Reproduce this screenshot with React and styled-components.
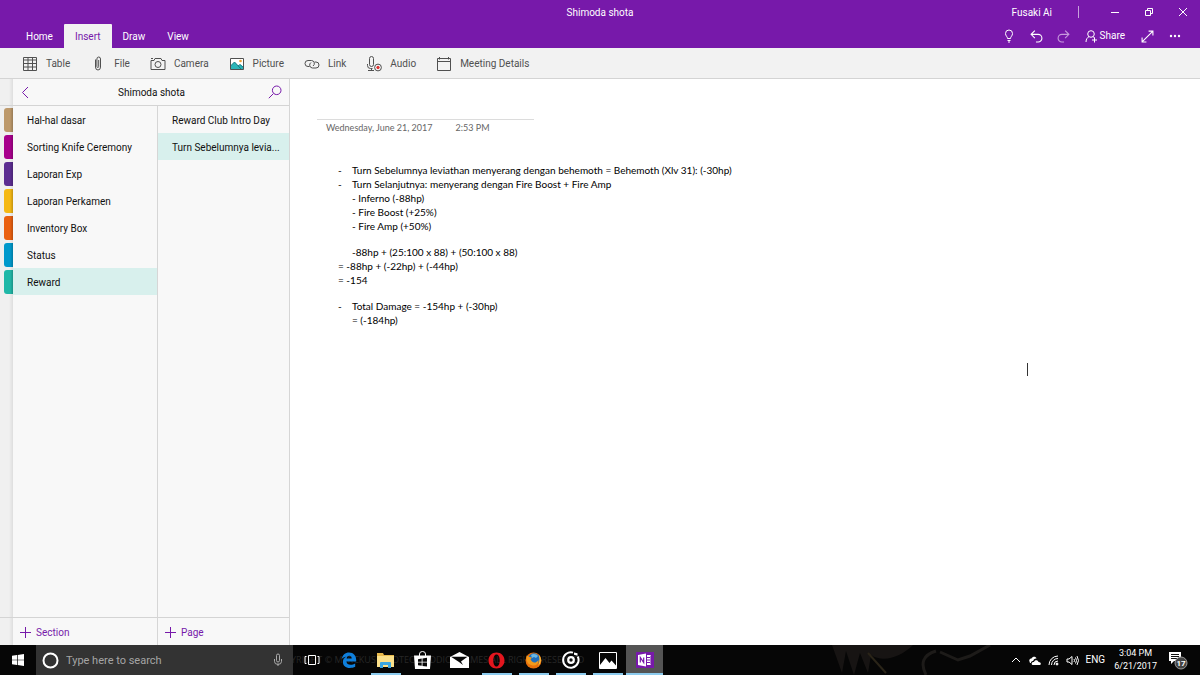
import React from "react";
import styled, { createGlobalStyle } from "styled-components";

const Global = createGlobalStyle`
  *, *::before, *::after { box-sizing: border-box; }
  body { margin: 0; background: #fff; }
  button, input { font: inherit; color: inherit; border: 0; padding: 0; background: none; }
  svg { display: block; flex: none; }
`;

const ui = `Roboto, "Open Sans", sans-serif`;
const noteFont = `Lato, "Open Sans", sans-serif`;

const Window = styled.div`
  min-height: 100vh;
  display: flex;
  flex-direction: column;
  font-family: ${ui};
  font-size: 10px;
  line-height: 14px;
  color: #111;
`;

const Top = styled.header`
  background: #7719aa;
  color: #fff;
`;

const TitleBar = styled.div`
  display: grid;
  grid-template-columns: 1fr auto 1fr;
  align-items: center;
  height: 24px;
`;

const TitleText = styled.h1`
  grid-column: 2;
  margin: 0;
  padding-top: 2px;
  font-size: 10px;
  font-weight: 400;
`;

const WindowControls = styled.div`
  display: flex;
  justify-content: flex-end;
  align-items: center;
  height: 24px;
`;

const UserName = styled.span`
  padding-top: 2px;
`;

const Divider = styled.span`
  width: 1px;
  height: 12px;
  margin: 0 19px 0 26px;
  background: #c8a2dc;
`;

const ControlButton = styled.button`
  display: grid;
  place-items: center;
  width: ${(p) => p.$width || 34}px;
  height: 24px;
`;

const RibbonRow = styled.div`
  display: flex;
  justify-content: space-between;
  height: 24px;
`;

const Tabs = styled.nav`
  display: flex;
  padding-left: 15px;
`;

const Tab = styled.button`
  height: 24px;
  padding: 2px 11px 0;
  border-radius: 1px 1px 0 0;
  background: ${(p) => (p.$active ? "#f2f2f2" : "transparent")};
  color: ${(p) => (p.$active ? "#7719aa" : "#fff")};
`;

const Quick = styled.div`
  display: flex;
  align-items: center;
  padding-right: 12px;
`;

const ShareButton = styled.button`
  display: flex;
  align-items: center;
  gap: 2px;
  height: 24px;
  margin: 0 9px 0 8px;
`;

const Toolbar = styled.div`
  display: flex;
  align-items: center;
  gap: 20px;
  height: 31px;
  padding-left: 22px;
  background: #f2f2f2;
  border-bottom: 1px solid #d4d4d4;
  color: #505050;
`;

const Tool = styled.button`
  display: grid;
  grid-template-columns: 16px auto;
  align-items: center;
  justify-items: center;
  gap: 8px;
  height: 30px;
  padding-top: 1px;
`;

const Main = styled.main`
  flex: 1;
  display: flex;
  min-height: 0;
`;

const Side = styled.aside`
  display: grid;
  grid-template-columns: 13px 145px 131px;
  grid-template-rows: 27px 1fr 28px;
  flex: none;
  background: #f8f8f8;
  border-right: 1px solid #d6d6d6;
`;

const RailCell = styled.div`
  background: linear-gradient(90deg, #f0f0f0 9px, #dedede);
  border-bottom: ${(p) => (p.$top ? "1px solid #d4d4d4" : "0")};
  border-top: ${(p) => (p.$foot ? "1px solid #d4d4d4" : "0")};
`;

const Rail = styled(RailCell)`
  display: flex;
  flex-direction: column;
  gap: 3px;
  padding: 2px 0 0 4px;
`;

const ColourTab = styled.span`
  height: 24px;
  border-radius: 3px 0 0 3px;
  background: linear-gradient(90deg, transparent 6px, rgba(0, 0, 0, 0.2)), ${(p) => p.$colour};
`;

const BookHeader = styled.div`
  grid-column: 2 / 4;
  display: flex;
  align-items: center;
  justify-content: space-between;
  padding: 0 7px 0 8px;
  border-bottom: 1px solid #d4d4d4;
`;

const BookTitle = styled.h2`
  margin: 0;
  padding-top: 2px;
  font-size: 10px;
  font-weight: 400;
`;

const IconButton = styled.button`
  display: flex;
  width: 14px;
`;

const List = styled.ul`
  margin: 0;
  padding: 0;
  list-style: none;
  border-right: ${(p) => (p.$divided ? "1px solid #d6d6d6" : "0")};
`;

const Entry = styled.button`
  display: block;
  width: 100%;
  height: 27px;
  padding: 2px 8px 0 14px;
  text-align: left;
  white-space: nowrap;
  overflow: hidden;
  text-overflow: ellipsis;
  background: ${(p) => (p.$active ? "#d8f0ed" : "transparent")};
`;

const AddButton = styled.button`
  display: flex;
  align-items: center;
  gap: 5px;
  padding: 2px 0 0 7px;
  border-top: 1px solid #d4d4d4;
  border-right: ${(p) => (p.$divided ? "1px solid #d6d6d6" : "0")};
  color: #7719aa;
`;

const Page = styled.article`
  flex: 1;
  padding: 40px 27px;
  font-family: ${noteFont};
  font-size: 10px;
  line-height: 14px;
  position: relative;
`;

const Stamp = styled.div`
  display: flex;
  gap: 23px;
  width: 217px;
  padding: 1px 0 0 9px;
  border-top: 1px solid #dcdcdc;
  font-size: 9px;
  color: #666;
`;

const Note = styled.div`
  display: flex;
  flex-direction: column;
  gap: 12px;
  padding: 28px 0 0 21px;
  color: #000;
`;

const Line = styled.div`
  display: grid;
  grid-template-columns: 14px 1fr;
`;

const Caret = styled.span`
  position: absolute;
  left: 81%;
  top: 284px;
  width: 1px;
  height: 13px;
  background: #333;
`;

const Taskbar = styled.footer`
  position: relative;
  display: flex;
  height: 30px;
  background: #060606;
  color: #fff;
  overflow: hidden;
`;

const Wallpaper = styled.svg`
  position: absolute;
  right: 150px;
  top: 0;
`;

const WallText = styled.span`
  position: absolute;
  left: 273px;
  top: 8px;
  font-family: "Open Sans", sans-serif;
  font-size: 9px;
  color: #262626;
  white-space: nowrap;
`;

const StartButton = styled.button`
  display: grid;
  place-items: center;
  width: 36px;
`;

const SearchBox = styled.label`
  position: relative;
  display: flex;
  align-items: center;
  gap: 7px;
  width: 257px;
  padding: 0 10px 0 6px;
  background: #333;
`;

const SearchInput = styled.input`
  flex: 1;
  min-width: 0;
  height: 20px;
  font-size: 11px;
  &::placeholder { color: #a5a5a5; opacity: 1; }
`;

const Apps = styled.div`
  position: relative;
  display: flex;
  flex: 1;
`;

const TaskButton = styled.button`
  display: grid;
  place-items: center;
  width: 37px;
  height: 30px;
  background: ${(p) => (p.$active ? "#545454" : "transparent")};
  box-shadow: ${(p) => (p.$active ? "inset 0 -2px #8ccbee" : "none")};
  position: relative;
  &::after {
    content: "";
    display: ${(p) => (p.$open ? "block" : "none")};
    position: absolute;
    left: 4px;
    right: 3px;
    bottom: 0;
    height: 2px;
    background: #8ccbee;
  }
`;

const Tray = styled.div`
  position: relative;
  display: flex;
  align-items: center;
  gap: 7px;
  padding-right: 12px;
`;

const Clock = styled.time`
  font-size: 9px;
  line-height: 13px;
  text-align: center;
  margin: 0 4px 0 2px;
`;

const Icon = ({ w = 16, h = 16, vw, vh, c = "currentColor", s = 1, children }) => (
  <svg width={w} height={h} viewBox={`0 0 ${vw || w} ${vh || h}`} fill="none" stroke={c} strokeWidth={s} aria-hidden="true">
    {children}
  </svg>
);

const tools = [
  ["Table", <Icon w={16} h={14}><path d="M1.5 .5h13v13h-13zM1.5 3h13M1.5 6.500h13M1.5 10h13M6 .5v13M10.500 .5v13" /></Icon>],
  ["File", <Icon w={10} h={16}><path d="M2.500 3.500v7.500a2.500 3 0 0 0 5 0V3a1.800 2 0 0 0-3.600 0v7.500a.9 1 0 0 0 1.800 0V4" /></Icon>],
  ["Camera", <Icon w={16} h={14}><path d="M1 3.500h3l1-2h6l1 2h3v9H1zM1 1.500h2" /><circle cx="8" cy="7.500" r="3" /></Icon>],
  ["Picture", <Icon w={16} h={14}><path fill="#fff" stroke="none" d="M1.500 1.500h13v11h-13z" /><path d="M1.500 12.500V9l4-4 4 4 2-1.500 3 2.500v2.500z" fill="#2bb5b8" stroke="none" /><path d="M1.500 9l4-4 7 7.500M9 9l2-1.500 3.500 3" stroke="#147c83" /><circle cx="11.500" cy="4" r="1.300" fill="#f0a030" stroke="none" /><path d="M1.500 1.500h13v11h-13z" /></Icon>],
  ["Link", <Icon w={16} h={12}><path d="M5.500 8.500H4A3 3 0 0 1 4 2.500h3.500a3 3 0 0 1 1.500 5.500M10.500 4H12a3 3 0 0 1 0 6H8.500A3 3 0 0 1 7 4.500" /></Icon>],
  ["Audio", <Icon w={16} h={16}><path d="M3.500 2.500a2 2 0 0 1 4 0v6a2 2 0 0 1-4 0zM1.500 8v1.500a3 3 0 0 0 3 3h2M5.500 12.500V15M2 14.500h6" /><circle cx="12" cy="11.500" r="3.400" /><circle cx="12" cy="11.500" r="1.200" fill="#e03030" stroke="#e03030" /></Icon>],
  ["Meeting Details", <Icon w={16} h={14}><path d="M1.500 1.500h13v12h-13zM1.500 4.500h13M3.500 0v2.500M12.500 0v2.500" /></Icon>],
];

const sections = [
  ["Hal-hal dasar", "#bd996b"],
  ["Sorting Knife Ceremony", "#a8008c"],
  ["Laporan Exp", "#5c2d91"],
  ["Laporan Perkamen", "#f5b914"],
  ["Inventory Box", "#ea6010"],
  ["Status", "#0099cc"],
  ["Reward", "#20b8a8"],
];

const note = [
  [
    ["-", "Turn Sebelumnya leviathan menyerang dengan behemoth = Behemoth (Xlv 31): (-30hp)"],
    ["-", "Turn Selanjutnya: menyerang dengan Fire Boost + Fire Amp"],
    ["", "- Inferno (-88hp)"],
    ["", "- Fire Boost (+25%)"],
    ["", "- Fire Amp (+50%)"],
  ],
  [
    ["", "-88hp + (25:100 x 88) + (50:100 x 88)"],
    [null, "= -88hp + (-22hp) + (-44hp)"],
    [null, "= -154"],
  ],
  [
    ["-", "Total Damage = -154hp + (-30hp)"],
    ["", "= (-184hp)"],
  ],
];

const apps = [
  ["Task View", false, <Icon w={16} h={12}><path d="M4.500 1.500h7v9h-7zM2.500 2.500h-1.500v7h1.500M13.500 2.500H15v7h-1.500" /></Icon>],
  ["Edge", false, <svg width="16" height="16" viewBox="0 0 16 16"><path fill="#0f7fdc" d="M.7 7.200C1.300 3 4.300.5 8 .5c4.600 0 7.200 3.300 7.200 7.500v1.500H5.400c.2 2.300 2 3.300 4.200 3.300 1.700 0 3.200-.5 4.600-1.300v3.200c-1.500.8-3.400 1.200-5.400 1.200-4.200 0-6.900-2.500-6.900-6 0-2.300 1.300-4.400 3.600-5.400C3 5 1.600 5.800.7 7.200zM5.600 6.600h5.200c0-1.900-.9-2.900-2.500-2.900-1.500 0-2.500 1.200-2.700 2.900z" /></svg>],
  ["File Explorer", true, <svg width="17" height="15" viewBox="0 0 17 15"><path fill="#e8b94c" d="M0 0h6l1 2h10v12H0z" /><path fill="#fbe08a" d="M0 3h17v11H0z" /><path fill="#3ba6e0" d="M3 15v-5a1 1 0 0 1 1-1h9a1 1 0 0 1 1 1v5h-3v-3H6v3z" /></svg>],
  ["Store", false, <svg width="17" height="18" viewBox="0 0 17 18"><path fill="none" stroke="#fff" d="M5.500 5V3a3 2.500 0 0 1 6 0v2" /><path fill="#fff" d="M0 4.500h17L16 18H1z" /><path fill="#080808" d="M4 8.200l3.700-.6v3.200H4zM8.500 7.500l4.500-.7v4H8.500zM4 11.600h3.700v3.200L4 14.200zM8.500 11.600H13v4l-4.500-.7z" /></svg>],
  ["Mail", false, <svg width="19" height="16" viewBox="0 0 19 16"><path fill="#fff" d="M0 5l9.500-5L19 5v11H0z" /><path fill="#080808" d="M1 4.800h16.500L11 9.500l2 3.500-4-3z" /></svg>],
  ["Opera", true, <svg width="17" height="17" viewBox="0 0 17 17"><path fill="#e3161e" fillRule="evenodd" d="M8.500.5c4.600 0 8 3.500 8 8s-3.400 8-8 8-8-3.500-8-8 3.400-8 8-8zm0 2c-2 0-3.200 2.600-3.200 6s1.200 6 3.200 6 3.200-2.600 3.200-6-1.200-6-3.200-6z" /></svg>],
  ["Firefox", true, <svg width="17" height="17" viewBox="0 0 17 17"><circle cx="8.500" cy="8.500" r="8" fill="#e8710c" /><circle cx="9" cy="7" r="5.800" fill="#1f6dbb" /><path fill="#68b8e6" d="M6 3c2-2 6-1 7 1l-2 2-2-1-2 1z" /><path fill="#f39a1b" d="M1.500 3.500L4.500 5 7 5.500 5.500 7.500 7 9.500c2 2 5 1 6.500-1.500.5 4-3 6-6 5.500S2 11 1.500 8z" /><path fill="#fbd04b" d="M14 3c2.500 3 2.500 8-1 11 1.500-2.500 2-6 1-11z" /></svg>],
  ["Groove Music", true, <svg width="18" height="18" viewBox="0 0 18 18"><path fill="none" stroke="#fff" strokeWidth="2" d="M15.700 5.500A7.700 7.700 0 1 1 11 1.600" /><circle cx="9" cy="9" r="2.800" fill="none" stroke="#fff" strokeWidth="2.200" /><path fill="#fff" d="M12 1.500l3.500.8v2.400l-3.500-.9z" /></svg>],
  ["Photos", true, <svg width="18" height="17" viewBox="0 0 18 17"><path fill="none" stroke="#fff" d="M.5.5h17v16H.5z" /><path fill="#fff" d="M1 13l5.500-7 4 5 2-2.500 4.500 5V16H1z" /></svg>],
  ["OneNote", true, <svg width="18" height="18" viewBox="0 0 18 18"><path fill="#7719aa" d="M0 1h18v16H0z" /><path fill="#fff" d="M2 4L10 2.500v13L2 14zM11 4h4v10h-4z" /><path fill="none" stroke="#7719aa" strokeWidth="1.200" d="M4.300 11.500v-5l3.400 5v-5M11 6.500h3M11 9h3M11 11.500h3M15 4.500v9" /></svg>, true],
];

export default function App() {
  return (
    <Window>
      <Global />
      <Top>
        <TitleBar>
          <TitleText>Shimoda shota</TitleText>
          <WindowControls>
            <UserName>Fusaki Ai</UserName>
            <Divider />
            <ControlButton aria-label="Minimize"><Icon w={10} h={10}><path d="M1 5.500h8" /></Icon></ControlButton>
            <ControlButton aria-label="Restore"><Icon w={10} h={10}><path d="M1.500 3.500h5v5h-5zM3.500 3.500v-2h5v5h-2" /></Icon></ControlButton>
            <ControlButton aria-label="Close"><Icon w={10} h={10}><path d="M1 1l8 8M9 1L1 9" /></Icon></ControlButton>
          </WindowControls>
        </TitleBar>
        <RibbonRow>
          <Tabs>
            {["Home", "Insert", "Draw", "View"].map((t) => (
              <Tab key={t} $active={t === "Insert"}>{t}</Tab>
            ))}
          </Tabs>
          <Quick>
            <ControlButton $width={27} aria-label="Tell me"><Icon w={10} h={14}><path d="M3.500 9.500C3.500 7.500 1.500 7 1.500 4.500a3.500 3.500 0 0 1 7 0c0 2.500-2 3-2 5zM3.500 11.500h3M4 13h2" /></Icon></ControlButton>
            <ControlButton $width={27} aria-label="Undo"><Icon w={13} h={13} vw={12} vh={12}><path d="M4.500 .5L1 4l3.500 3.500M1 4h6.500a3.500 3.500 0 0 1 0 7H5.500" /></Icon></ControlButton>
            <ControlButton $width={27} aria-label="Redo"><Icon w={13} h={13} vw={12} vh={12} c="#c79add"><path d="M7.500 .5L11 4 7.500 7.500M11 4H4.500a3.500 3.500 0 0 0 0 7h2" /></Icon></ControlButton>
            <ShareButton><Icon w={13} h={13}><circle cx="6" cy="4" r="3.300" /><path d="M1 12c0-3 1.500-4.500 3-5.500M8 6.500l1.500 1.500M9.500 7.500v5M7 10h5" /></Icon>Share</ShareButton>
            <ControlButton $width={27} aria-label="Full screen"><Icon w={13} h={13} vw={12} vh={12}><path d="M1 11L11 1M7 1h4v4M1 7v4h4" /></Icon></ControlButton>
            <ControlButton $width={27} aria-label="More"><svg width="12" height="4" viewBox="0 0 12 4" fill="#fff"><circle cx="2" cy="2" r="1.200" /><circle cx="6" cy="2" r="1.200" /><circle cx="10" cy="2" r="1.200" /></svg></ControlButton>
          </Quick>
        </RibbonRow>
      </Top>
      <Toolbar>
        {tools.map(([name, icon]) => (
          <Tool key={name}>{icon}<span>{name}</span></Tool>
        ))}
      </Toolbar>
      <Main>
        <Side>
          <RailCell $top />
          <BookHeader>
            <IconButton aria-label="Back"><Icon w={8} h={13} c="#7719aa"><path d="M7 1L1.500 6.500 7 12" /></Icon></IconButton>
            <BookTitle>Shimoda shota</BookTitle>
            <IconButton aria-label="Search"><Icon w={14} h={14} c="#7719aa"><circle cx="8.700" cy="5.300" r="4.300" /><path d="M5.500 8.500L.8 13.200" /></Icon></IconButton>
          </BookHeader>
          <Rail>
            {sections.map(([name, colour]) => <ColourTab key={name} $colour={colour} />)}
          </Rail>
          <List $divided>
            {sections.map(([name]) => (
              <li key={name}><Entry $active={name === "Reward"}>{name}</Entry></li>
            ))}
          </List>
          <List>
            <li><Entry>Reward Club Intro Day</Entry></li>
            <li><Entry $active>Turn Sebelumnya levia...</Entry></li>
          </List>
          <RailCell $foot />
          <AddButton $divided><Icon w={11} h={11} c="#7719aa"><path d="M5.500 0v11M0 5.500h11" /></Icon>Section</AddButton>
          <AddButton><Icon w={11} h={11} c="#7719aa"><path d="M5.500 0v11M0 5.500h11" /></Icon>Page</AddButton>
        </Side>
        <Page>
          <Stamp><span>Wednesday, June 21, 2017</span><span>2:53 PM</span></Stamp>
          <Note>
            {note.map((group, i) => (
              <div key={i}>
                {group.map(([mark, text]) =>
                  mark === null ? <div key={text}>{text}</div> : <Line key={text}><span>{mark}</span><span>{text}</span></Line>
                )}
              </div>
            ))}
          </Note>
          <Caret />
        </Page>
      </Main>
      <Taskbar>
        <Wallpaper width="400" height="30" viewBox="650 645 400 30" aria-hidden="true">
          <path d="M832 645l10 28 4-22 8 24 6-22 8 20 3-18c12 8 30 2 42-10z" fill="#171413" />
          <path d="M868 653l18 20" stroke="#2a2418" strokeWidth="2" fill="none" />
          <path d="M926 675c-6-12-3-20 10-24M940 652l18 8 12-4 20-11" stroke="#1d1b19" strokeWidth="3" fill="none" />
        </Wallpaper>
        <WallText aria-hidden="true">COPYRIGHT © MERCKUS INFOTECH ADDICT GAMES ALL RIGHTS RESERVED</WallText>
        <StartButton aria-label="Start"><svg width="12" height="12" viewBox="0 0 12 12" fill="#fff"><path d="M0 1.700l5-.7v4.700H0zM5.700.9L12 0v5.700H5.700zM0 6.300h5V11l-5-.7zM5.700 6.300H12V12l-6.300-.9z" /></svg></StartButton>
        <SearchBox>
          <Icon w={17} h={17} c="#fff" s={2}><circle cx="8.500" cy="8.500" r="7" /></Icon>
          <SearchInput placeholder="Type here to search" aria-label="Type here to search" />
          <Icon w={10} h={14} c="#aaa"><path d="M3.500 2.500a1.500 1.500 0 0 1 3 0v5a1.500 1.500 0 0 1-3 0zM1.500 6v2.500a3 2.500 0 0 0 7 0V6M5 10.500V13" /></Icon>
        </SearchBox>
        <Apps>
          {apps.map(([name, open, icon, active]) => (
            <TaskButton key={name} aria-label={name} $open={open} $active={active}>{icon}</TaskButton>
          ))}
        </Apps>
        <Tray>
          <Icon w={10} h={6}><path d="M1 5l4-4 4 4" /></Icon>
          <svg width="13" height="9" viewBox="0 0 13 9" fill="#fff"><path d="M1.500 5.500C.5 3.500 2.500 2 3.500 2.500 4.500 0 8 0 8.500 2.500 6.500 2.300 5.500 3.500 5.200 5 3.500 4.800 3 6 3 7 2 7 1.700 6.500 1.500 5.500z" /><path d="M4.500 9C3 8.500 3.500 5.500 6 6c.5-2.500 4-2.500 4.500 0C13 6 13.500 8.500 12 9z" /></svg>
          <Icon w={11} h={11}><path d="M1 10A9 9 0 0 1 10 1M3.500 10A6.500 6.500 0 0 1 10 3.500M6 10a4 4 0 0 1 4-4" /><circle cx="9" cy="9" r="1" fill="#fff" /></Icon>
          <Icon w={13} h={11}><path d="M1 4h2l3-2.500v8L3 7H1zM8 4q1 1.500 0 3M9.500 2.500q2 3 0 6M11 1q3 4.500 0 9" /></Icon>
          <span>ENG</span>
          <Clock><div>3:04 PM</div><div>6/21/2017</div></Clock>
          <svg width="20" height="19" viewBox="0 0 20 19"><path fill="#fff" d="M1 1h12v9H6l-3 3v-3H1z" /><path stroke="#111" d="M3 3.500h8M3 5.500h8M3 7.500h6" /><circle cx="13" cy="12" r="6" fill="#444" stroke="#999" /><text x="13" y="15" fontSize="8" fontWeight="700" textAnchor="middle" fill="#fff">17</text></svg>
        </Tray>
      </Taskbar>
    </Window>
  );
}
